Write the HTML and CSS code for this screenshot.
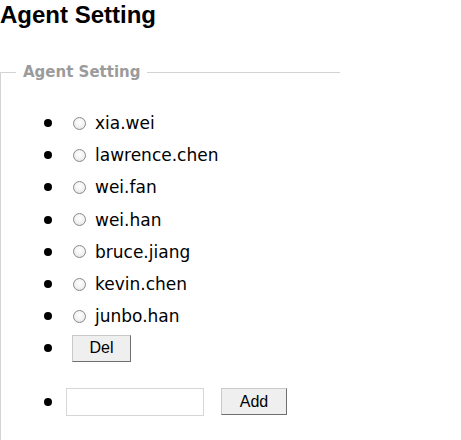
FILE: index.html
```html
<!DOCTYPE html>
<html>
<head>
<meta charset="utf-8">
<link rel="stylesheet" href="styles.css">
</head>
<body>
<h1 class="title">Agent Setting</h1>
<fieldset class="panel">
  <legend class="panel-legend">Agent Setting</legend>
  <ul class="agents">
    <li class="agent"><input class="radio" type="radio" name="agent"><span class="name">xia.wei</span></li>
    <li class="agent"><input class="radio" type="radio" name="agent"><span class="name">lawrence.chen</span></li>
    <li class="agent"><input class="radio" type="radio" name="agent"><span class="name">wei.fan</span></li>
    <li class="agent"><input class="radio" type="radio" name="agent"><span class="name">wei.han</span></li>
    <li class="agent"><input class="radio" type="radio" name="agent"><span class="name">bruce.jiang</span></li>
    <li class="agent"><input class="radio" type="radio" name="agent"><span class="name">kevin.chen</span></li>
    <li class="agent"><input class="radio" type="radio" name="agent"><span class="name">junbo.han</span></li>
    <li class="agent agent-del"><button class="btn btn-del" type="button">Del</button></li>
    <li class="agent agent-add"><input class="text-input" type="text"><button class="btn btn-add" type="button">Add</button></li>
  </ul>
</fieldset>
</body>
</html>
```
FILE: styles.css
```css
html, body {
  margin: 0;
  padding: 0;
  background: #fff;
}

body {
  font-family: "DejaVu Sans", Verdana, sans-serif;
  color: #000;
}

.title {
  margin: 0;
  padding-top: 1px;
  font-family: "Liberation Sans", Arial, sans-serif;
  font-weight: bold;
  font-size: 24px;
  line-height: 28px;
}

.panel {
  margin: 34px 0 0 0;
  padding: 0 0 40px 15px;
  width: 324px;
  border: 1px solid #d3d3d3;
  border-right: none;
  border-bottom: none;
}

.panel-legend {
  padding: 0 7px;
  font-family: "DejaVu Sans", Verdana, sans-serif;
  font-weight: bold;
  font-size: 15px;
  color: #9b9b9b;
}

.agents {
  list-style: none;
  margin: 26px 0 0 0;
  padding: 0;
}

.agent {
  display: flex;
  align-items: center;
  height: 32.2px;
}

.agent::before {
  content: "";
  width: 8px;
  height: 8px;
  border-radius: 50%;
  background: #000;
  margin-left: 28px;
  flex: none;
}

.radio {
  -webkit-appearance: none;
  appearance: none;
  box-sizing: border-box;
  width: 13px;
  height: 13px;
  margin: 0 9px 0 21px;
  border: 1px solid #8a8a8a;
  border-radius: 50%;
  background: radial-gradient(circle at 50% 40%, #ffffff 0%, #f3f3f3 50%, #dcdcdc 100%);
}

.name {
  font-size: 17px;
  line-height: 20px;
}

.btn {
  box-sizing: border-box;
  height: 27px;
  padding: 0;
  font-family: "Liberation Sans", Arial, sans-serif;
  font-size: 16px;
  color: #000;
  background: #efefef;
  border: 1px solid;
  border-color: #c9c9c9 #6f6f6f #6f6f6f #c9c9c9;
  border-radius: 0;
}

.btn-del {
  width: 59px;
  margin-left: 20px;
}

.agent-add {
  margin-top: 21px;
}

.text-input {
  box-sizing: border-box;
  width: 138px;
  height: 28px;
  margin: 0 0 0 14px;
  border: 1px solid #d6d6d6;
  background: #fff;
  padding: 0 4px;
}

.btn-add {
  width: 66px;
  margin-left: 17px;
}
```
